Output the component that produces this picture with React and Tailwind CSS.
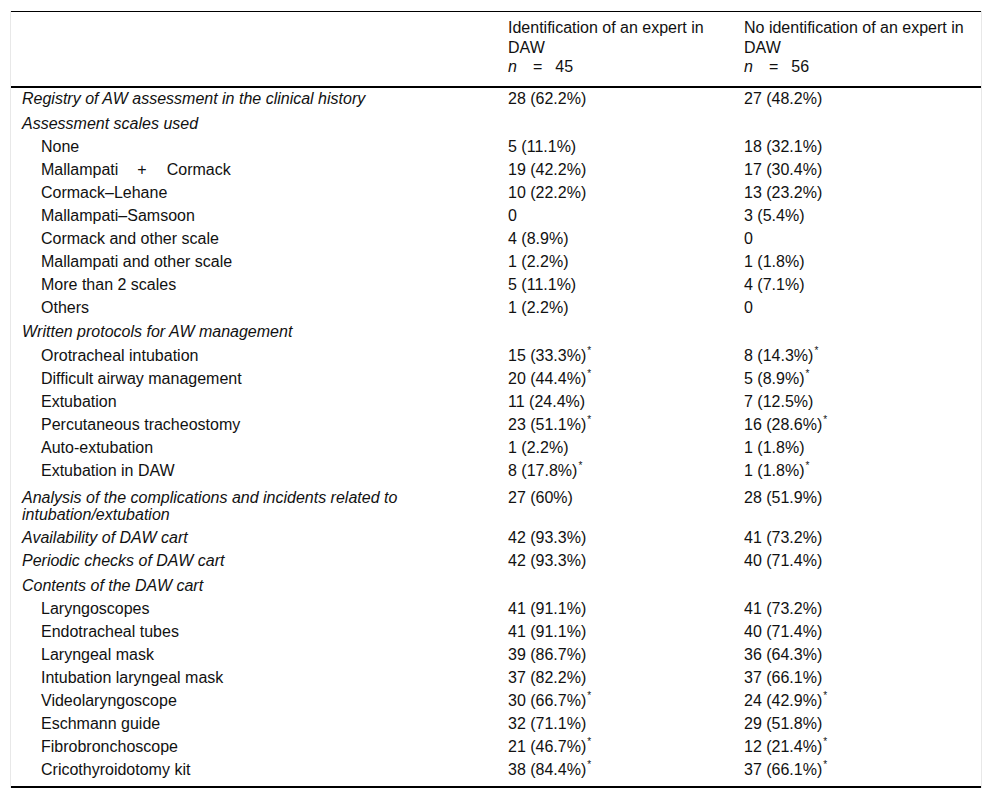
import React from "react";

const rows = [
  { label: "Registry of AW assessment in the clinical history", group: true, a: "28 (62.2%)", b: "27 (48.2%)", pad: "pt-[2px]" },
  { label: "Assessment scales used", group: true, pad: "pt-[5px]" },
  { label: "None", a: "5 (11.1%)", b: "18 (32.1%)" },
  { label: "mallampati", a: "19 (42.2%)", b: "17 (30.4%)" },
  { label: "Cormack–Lehane", a: "10 (22.2%)", b: "13 (23.2%)" },
  { label: "Mallampati–Samsoon", a: "0", b: "3 (5.4%)" },
  { label: "Cormack and other scale", a: "4 (8.9%)", b: "0" },
  { label: "Mallampati and other scale", a: "1 (2.2%)", b: "1 (1.8%)" },
  { label: "More than 2 scales", a: "5 (11.1%)", b: "4 (7.1%)" },
  { label: "Others", a: "1 (2.2%)", b: "0" },
  { label: "Written protocols for AW management", group: true, pad: "pt-[4px]" },
  { label: "Orotracheal intubation", a: "15 (33.3%)", b: "8 (14.3%)", sa: true, sb: true, pad: "pt-[4px]" },
  { label: "Difficult airway management", a: "20 (44.4%)", b: "5 (8.9%)", sa: true, sb: true },
  { label: "Extubation", a: "11 (24.4%)", b: "7 (12.5%)" },
  { label: "Percutaneous tracheostomy", a: "23 (51.1%)", b: "16 (28.6%)", sa: true, sb: true },
  { label: "Auto-extubation", a: "1 (2.2%)", b: "1 (1.8%)" },
  { label: "Extubation in DAW", a: "8 (17.8%)", b: "1 (1.8%)", sa: true, sb: true },
  { label: "Analysis of the complications and incidents related to intubation/extubation", group: true, a: "27 (60%)", b: "28 (51.9%)", pad: "pt-[7px]" },
  { label: "Availability of DAW cart", group: true, a: "42 (93.3%)", b: "41 (73.2%)" },
  { label: "Periodic checks of DAW cart", group: true, a: "42 (93.3%)", b: "40 (71.4%)" },
  { label: "Contents of the DAW cart", group: true, pad: "pt-[5px]" },
  { label: "Laryngoscopes", a: "41 (91.1%)", b: "41 (73.2%)" },
  { label: "Endotracheal tubes", a: "41 (91.1%)", b: "40 (71.4%)" },
  { label: "Laryngeal mask", a: "39 (86.7%)", b: "36 (64.3%)" },
  { label: "Intubation laryngeal mask", a: "37 (82.2%)", b: "37 (66.1%)" },
  { label: "Videolaryngoscope", a: "30 (66.7%)", b: "24 (42.9%)", sa: true, sb: true },
  { label: "Eschmann guide", a: "32 (71.1%)", b: "29 (51.8%)" },
  { label: "Fibrobronchoscope", a: "21 (46.7%)", b: "12 (21.4%)", sa: true, sb: true },
  { label: "Cricothyroidotomy kit", a: "38 (84.4%)", b: "37 (66.1%)", sa: true, sb: true },
];

// little raised asterisk after significant values
const Star = () => (
  <span className="text-[10px] relative -top-[7px] ml-[1px] leading-none">*</span>
);

const Cell = ({ value, star }) => (
  <span>
    {value}
    {value && star && <Star />}
  </span>
);

const App = () => {
  return (
    <div
      className="bg-white w-[992px] h-[798px] pt-[11px] text-[16px] text-[#111] leading-[17px]"
      style={{ fontFamily: '"Liberation Sans", Arial, sans-serif' }}
    >
      <div className="ml-[10px] w-[972px] border-x border-[#e8e8e8]">
        {/* header */}
        <div className="grid grid-cols-[486px_236px_248px] border-t border-black border-b-2 leading-[19.5px]">
          <div />
          <div className="pl-[11px] pr-[12px] pt-[6px] pb-[9px]">
            <div>Identification of an expert in DAW</div>
            <div>
              <i>n</i>
              <span className="ml-[16px] mr-[13px]">=</span>
              45
            </div>
          </div>
          <div className="pl-[11px] pr-[11px] pt-[6px] pb-[9px]">
            <div>No identification of an expert in DAW</div>
            <div>
              <i>n</i>
              <span className="ml-[16px] mr-[13px]">=</span>
              56
            </div>
          </div>
        </div>

        {/* body */}
        <div className="border-b-2 border-black pb-[5px]">
          {rows.map((r, i) => (
            <div
              key={i}
              className={`grid grid-cols-[486px_236px_248px] ${r.pad || "pt-[3px]"} pb-[3px]`}
            >
              <div className={`${r.group ? "italic pl-[11px] pr-[40px]" : "pl-[30px]"}`}>
                {r.label === "mallampati" ? (
                  <span>
                    Mallampati<span className="ml-[19px] mr-[20px]">+</span>Cormack
                  </span>
                ) : (
                  r.label
                )}
              </div>
              <div className="pl-[11px]">
                <Cell value={r.a} star={r.sa} />
              </div>
              <div className="pl-[11px]">
                <Cell value={r.b} star={r.sb} />
              </div>
            </div>
          ))}
        </div>
      </div>
    </div>
  );
};

export default App;
